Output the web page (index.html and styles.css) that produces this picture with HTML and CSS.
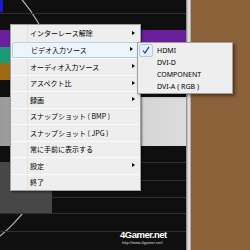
FILE: index.html
```html
<!DOCTYPE html>
<html lang="ja">
<head>
<meta charset="utf-8">
<link rel="stylesheet" href="styles.css">
</head>
<body>
<div class="screen">
  <div class="video">
    <svg class="circle" width="186" height="250" viewBox="0 0 186 250">
      <circle cx="-106" cy="107" r="167" fill="none" stroke="#b4b4b4" stroke-width="1.2"/>
    </svg>
    <div class="blue"></div>
    <div class="hline" style="top:13px"></div>
    <div class="hline" style="top:30px"></div>
    <div class="bar purple"></div>
    <div class="bar teal"></div>
    <div class="bar orange"></div>
    <div class="grayramp"></div>
    <div class="hline" style="top:162px"></div>
    <div class="hline" style="top:180px"></div>
    <div class="hline" style="top:197px"></div>
    <div class="hline" style="top:213px"></div>
    <div class="hline" style="top:231px"></div>
    <div class="darkgray"></div>
    <div class="logo">
      <div class="logo-name">4Gamer.net</div>
      <div class="logo-url">http://www.4gamer.net/</div>
    </div>
  </div>
  <div class="frame"></div>
  <div class="desk"></div>

  <div class="menu main-menu">
    <div class="item"><span class="label">インターレース解除</span><span class="arrow"></span></div>
    <div class="item hot"><span class="label">ビデオ入力ソース</span><span class="arrow"></span></div>
    <div class="item"><span class="label">オーディオ入力ソース</span><span class="arrow"></span></div>
    <div class="item"><span class="label">アスペクト比</span><span class="arrow"></span></div>
    <div class="item"><span class="label">録画</span><span class="arrow"></span></div>
    <div class="item"><span class="label">スナップショット ( BMP )</span></div>
    <div class="item"><span class="label">スナップショット ( JPG )</span></div>
    <div class="item"><span class="label">常に手前に表示する</span></div>
    <div class="item"><span class="label">設定</span><span class="arrow"></span></div>
    <div class="item"><span class="label">終了</span></div>
  </div>

  <div class="menu sub-menu">
    <div class="sitem"><span class="check"><svg width="8" height="8" viewBox="0 0 8 8"><path d="M1 4.5 L3 7 L7 0.8" fill="none" stroke="#1e3f78" stroke-width="1.2"/></svg></span><span class="label">HDMI</span></div>
    <div class="sitem"><span class="check"></span><span class="label">DVI-D</span></div>
    <div class="sitem"><span class="check"></span><span class="label">COMPONENT</span></div>
    <div class="sitem"><span class="check"></span><span class="label">DVI-A ( RGB )</span></div>
  </div>
</div>
</body>
</html>
```

FILE: styles.css
```css
html, body {
  margin: 0;
  padding: 0;
  background: #8b6139;
}
.screen {
  position: relative;
  width: 250px;
  height: 250px;
  overflow: hidden;
  display: flex;
}
.video {
  position: relative;
  width: 186px;
  height: 250px;
  background: #0f0f0f;
  overflow: hidden;
}
.frame {
  width: 5px;
  background: linear-gradient(to right, #7a7a7a, #d8d8d8 40%, #eeeeee 60%, #9a9a9a);
}
.desk {
  flex: 1;
  background: #8b6139;
}
.blue {
  position: absolute;
  left: 0; top: 0;
  width: 3px; height: 12px;
  background: #1818d8;
}
.hline {
  position: absolute;
  left: 0; right: 0;
  height: 1px;
  background: #2e2e2e;
}
.bar {
  position: absolute;
  left: 0;
  width: 186px;
}
.purple { top: 30px; height: 17px; background: #6a1f9c; }
.teal { top: 47px; height: 16px; background: #1a9a78; }
.orange { top: 63px; height: 17px; background: #a06a12; }
.grayramp {
  position: absolute;
  left: 0; top: 97px;
  width: 186px; height: 49px;
  background: linear-gradient(to right, #9a9a9a, #d2d2d2 70%, #dcdcdc);
}
.darkgray {
  position: absolute;
  left: 0; top: 162px;
  width: 52px; height: 51px;
  background: #474747;
}
.circle {
  position: absolute;
  left: 0; top: 0;
}
.logo {
  position: absolute;
  left: 120px; top: 230px;
  color: #ffffff;
  font-family: "Liberation Sans", Arial, sans-serif;
}
.logo-name {
  font-size: 9.5px;
  font-weight: bold;
  letter-spacing: -0.5px;
  line-height: 10px;
}
.logo-url {
  font-size: 4px;
  line-height: 5px;
  color: #dddddd;
  padding-left: 2px;
}

.menu {
  position: absolute;
  background: #eeeeee;
  border: 1px solid #a0a0a0;
  font-family: "Noto Sans CJK JP", "Noto Sans", sans-serif;
  color: #000000;
}
.main-menu {
  left: 10px; top: 24px;
  width: 129px;
  display: flex;
  flex-direction: column;
  box-shadow: 1px 1px 2px rgba(0,0,0,0.5);
}
.item {
  position: relative;
  height: 16.5px;
  display: flex;
  align-items: center;
  padding-left: 19px;
  font-size: 7px;
  box-sizing: border-box;
  border-top: 1px solid #fafafa;
}
.item:first-child { border-top: none; }
.item.hot {
  margin: 0 1px;
  padding-left: 18px;
  background: #eef4f9;
  border: 1px solid #b3d3ec;
  border-radius: 2px;
}
.main-menu::before {
  content: "";
  position: absolute;
  left: 16px; top: 0; bottom: 0;
  width: 1px;
  background: #e2e2e2;
}
.arrow {
  position: absolute;
  right: 5px;
  top: 50%;
  margin-top: -2.5px;
  width: 0; height: 0;
  border-top: 2.5px solid transparent;
  border-bottom: 2.5px solid transparent;
  border-left: 3px solid #000;
}
.sub-menu {
  left: 137px; top: 42px;
  width: 94px;
  padding: 1px 0;
  box-shadow: 2px 2px 3px rgba(0,0,0,0.45);
}
.sitem {
  height: 12px;
  display: flex;
  align-items: center;
  font-family: "Noto Sans", sans-serif;
  font-size: 7px;
}
.check {
  width: 14px;
  height: 12px;
  margin: 0 4px 0 1px;
  display: flex;
  align-items: center;
  justify-content: center;
  box-sizing: border-box;
}
.sitem:first-child .check {
  background: #e6eff8;
  border: 1px solid #a9cdea;
  border-radius: 2px;
  height: 13px;
}
```
